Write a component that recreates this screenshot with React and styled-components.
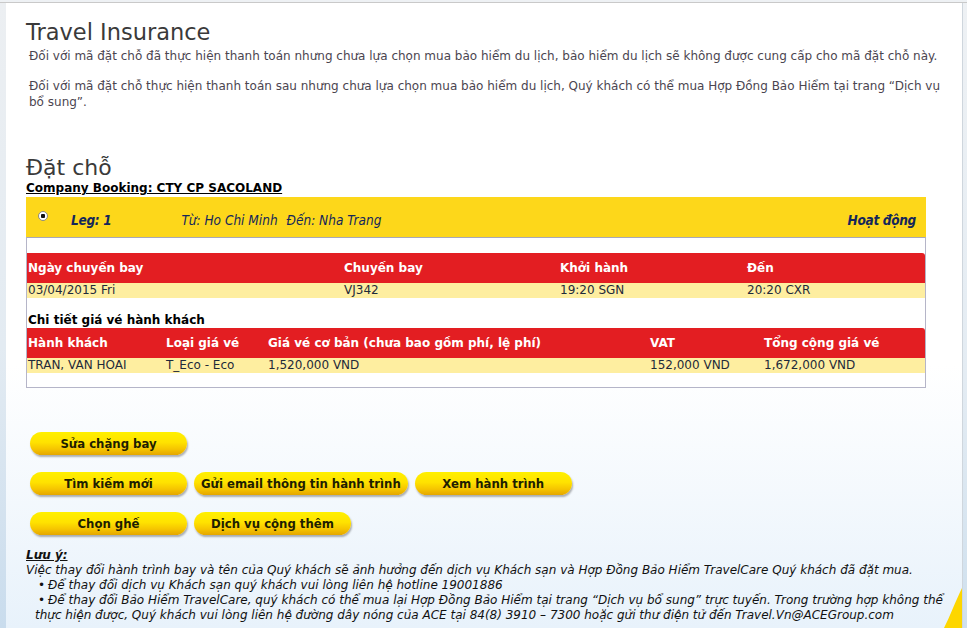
import React from "react";
import styled, { createGlobalStyle } from "styled-components";

const GlobalStyle = createGlobalStyle`
  html, body { margin: 0; padding: 0; }
  body {
    font-family: "DejaVu Sans", Verdana, sans-serif;
    font-size: 12px;
    background: linear-gradient(to bottom, #eef1f4 0%, #e4ecf3 60%, #cfe0ee 100%);
  }
`;

const Page = styled.div`
  border-top: 1px solid #c9c9c9;
  margin-top: 2px;
  height: 625px;
  display: flex;
  overflow: hidden;
`;

const LeftStrip = styled.div`
  width: 6px;
  flex: none;
  background: linear-gradient(to bottom, #eceff2 0%, #e3ebf2 55%, #c9dced 100%);
`;

const Panel = styled.div`
  position: relative;
  width: 957px;
  flex: none;
  border-right: 1px solid #cfd6dd;
  background: linear-gradient(to bottom, #ffffff 0%, #ffffff 58%, #e8f2fb 100%);
  padding: 14px 0 0 20px;
  box-sizing: border-box;
  overflow: hidden;
`;

const Swoosh = styled.svg`
  position: absolute;
  right: 0;
  bottom: 0;
`;

const Title = styled.h1`
  margin: 0;
  font-family: "DejaVu Sans", Tahoma, sans-serif;
  font-weight: normal;
  font-size: 22.5px;
  line-height: 30px;
  color: #3a3a3a;
`;

const Intro = styled.p`
  margin: ${(p) => p.$top}px 0 0 3px;
  font-size: 12px;
  line-height: 16px;
  color: #4b4550;
  width: 925px;
`;

const SectionTitle = styled(Title)`
  margin-top: 45px;
  font-size: 22px;
  line-height: 26px;
`;

const Company = styled.div`
  font-weight: bold;
  font-size: 12px;
  line-height: 14px;
  text-decoration: underline;
  color: #000;
`;

const LegBar = styled.div`
  margin-top: 2px;
  width: 900px;
  height: 40px;
  box-sizing: border-box;
  background: #fdd71a;
  display: flex;
  align-items: center;
  padding: 5px 10px 0 12px;
  font-family: "DejaVu Sans Condensed", Tahoma, sans-serif;
  font-style: italic;
  font-size: 13.5px;
  color: #14275a;
`;

const Radio = styled.span`
  width: 10px;
  height: 10px;
  margin-top: -8px;
  border-radius: 50%;
  border: 1px solid #8a8a8a;
  background: radial-gradient(circle, #111 0 2px, #fff 2.5px);
  box-sizing: border-box;
  flex: none;
`;

const LegLabel = styled.span`
  font-weight: ${(p) => (p.$bold ? 700 : 400)};
  margin-left: ${(p) => p.$left || 0}px;
  letter-spacing: ${(p) => (p.$bold ? "-0.3px" : "0")};
`;

const Spacer = styled.span`
  flex: 1;
`;

const Box = styled.div`
  width: 900px;
  box-sizing: border-box;
  border: 1px solid #b5b5c8;
  border-top: 1px solid #a8a8b8;
  background: #fff;
  padding: 15px 0 14px;
`;

const Row = styled.div`
  display: grid;
  grid-template-columns: ${(p) => p.$cols};
  padding-left: 1px;
`;

const HeadRow = styled(Row)`
  background: #e31e22;
  height: 30px;
  align-items: center;
  border-radius: 0 3px 0 0;
  color: #fff;
  font-weight: bold;
  font-size: 12px;
`;

const DataRow = styled(Row)`
  background: #feeea0;
  height: 15px;
  line-height: 15px;
  color: #1f2a3a;
  font-size: 12px;
`;

const SubTitle = styled.div`
  margin-top: 15px;
  font-weight: bold;
  font-size: 12px;
  line-height: 15px;
  color: #000;
  padding-left: 1px;
`;

const Buttons = styled.div`
  margin: 44px 0 0 4px;
  display: flex;
  flex-direction: column;
  gap: 17px;
`;

const ButtonRow = styled.div`
  display: flex;
  gap: 7px;
`;

const Button = styled.button`
  min-width: 157px;
  height: 23px;
  padding: 0 7px;
  border: none;
  border-radius: 12px;
  background: linear-gradient(to bottom, #fff000 0%, #ffe200 45%, #f5c400 75%, #e4a600 100%);
  box-shadow: 1px 2px 2px rgba(0, 0, 0, 0.3);
  font-family: "DejaVu Sans Condensed", Tahoma, sans-serif;
  font-weight: bold;
  font-size: 13px;
  color: #1e1e00;
  cursor: pointer;
`;

const Notes = styled.div`
  margin-top: 13px;
  font-style: italic;
  font-size: 12px;
  line-height: 15px;
  color: #111;
  width: 930px;
`;

const NoteTitle = styled.div`
  font-weight: bold;
  text-decoration: underline;
`;

const NoteList = styled.ul`
  margin: 0;
  padding: 0 0 0 9px;
  list-style: none;
`;

const NoteItem = styled.li`
  &::before {
    content: "•";
    display: inline-block;
    width: 13px;
    text-align: center;
    font-style: normal;
  }
`;

const flightCols = "316px 216px 187px 1fr";
const fareCols = "138px 102px 382px 114px 1fr";

export default function App() {
  return (
    <>
      <GlobalStyle />
      <Page>
        <LeftStrip />
        <Panel>
          <Title>Travel Insurance</Title>
          <Intro $top={1}>
            Đối với mã đặt chỗ đã thực hiện thanh toán nhưng chưa lựa chọn mua bảo hiểm du lịch, bảo hiểm du lịch sẽ không được cung cấp cho mã đặt chỗ này.
          </Intro>
          <Intro $top={14}>
            Đối với mã đặt chỗ thực hiện thanh toán sau nhưng chưa lựa chọn mua bảo hiểm du lịch, Quý khách có thể mua Hợp Đồng Bảo Hiểm tại trang “Dịch vụ bổ sung”.
          </Intro>

          <SectionTitle>Đặt chỗ</SectionTitle>
          <Company>Company Booking: CTY CP SACOLAND</Company>

          <LegBar>
            <Radio />
            <LegLabel $bold $left={23}>Leg: 1</LegLabel>
            <LegLabel $left={70}>Từ: Ho Chi Minh</LegLabel>
            <LegLabel $left={9}>Đến: Nha Trang</LegLabel>
            <Spacer />
            <LegLabel $bold>Hoạt động</LegLabel>
          </LegBar>

          <Box>
            <HeadRow $cols={flightCols}>
              <span>Ngày chuyến bay</span>
              <span>Chuyến bay</span>
              <span>Khởi hành</span>
              <span>Đến</span>
            </HeadRow>
            <DataRow $cols={flightCols}>
              <span>03/04/2015 Fri</span>
              <span>VJ342</span>
              <span>19:20 SGN</span>
              <span>20:20 CXR</span>
            </DataRow>

            <SubTitle>Chi tiết giá vé hành khách</SubTitle>
            <HeadRow $cols={fareCols}>
              <span>Hành khách</span>
              <span>Loại giá vé</span>
              <span>Giá vé cơ bản (chưa bao gồm phí, lệ phí)</span>
              <span>VAT</span>
              <span>Tổng cộng giá vé</span>
            </HeadRow>
            <DataRow $cols={fareCols}>
              <span>TRAN, VAN HOAI</span>
              <span>T_Eco - Eco</span>
              <span>1,520,000 VND</span>
              <span>152,000 VND</span>
              <span>1,672,000 VND</span>
            </DataRow>
          </Box>

          <Buttons>
            <ButtonRow>
              <Button>Sửa chặng bay</Button>
            </ButtonRow>
            <ButtonRow>
              <Button>Tìm kiếm mới</Button>
              <Button>Gửi email thông tin hành trình</Button>
              <Button>Xem hành trình</Button>
            </ButtonRow>
            <ButtonRow>
              <Button>Chọn ghế</Button>
              <Button>Dịch vụ cộng thêm</Button>
            </ButtonRow>
          </Buttons>

          <Notes>
            <NoteTitle>Lưu ý:</NoteTitle>
            <div>
              Việc thay đổi hành trình bay và tên của Quý khách sẽ ảnh hưởng đến dịch vụ Khách sạn và Hợp Đồng Bảo Hiểm TravelCare Quý khách đã đặt mua.
            </div>
            <NoteList>
              <NoteItem>Để thay đổi dịch vụ Khách sạn quý khách vui lòng liên hệ hotline 19001886</NoteItem>
              <NoteItem>
                Để thay đổi Bảo Hiểm TravelCare, quý khách có thể mua lại Hợp Đồng Bảo Hiểm tại trang “Dịch vụ bổ sung” trực tuyến. Trong trường hợp không thể thực hiện được, Quý khách vui lòng liên hệ đường dây nóng của ACE tại 84(8) 3910 – 7300 hoặc gửi thư điện tử đến Travel.Vn@ACEGroup.com
              </NoteItem>
            </NoteList>
          </Notes>

          <Swoosh width="20" height="40" viewBox="0 0 20 40">
            <path d="M20 0 C14 12 8 28 2 40 L20 40 Z" fill="#fdd600" />
          </Swoosh>
        </Panel>
      </Page>
    </>
  );
}
